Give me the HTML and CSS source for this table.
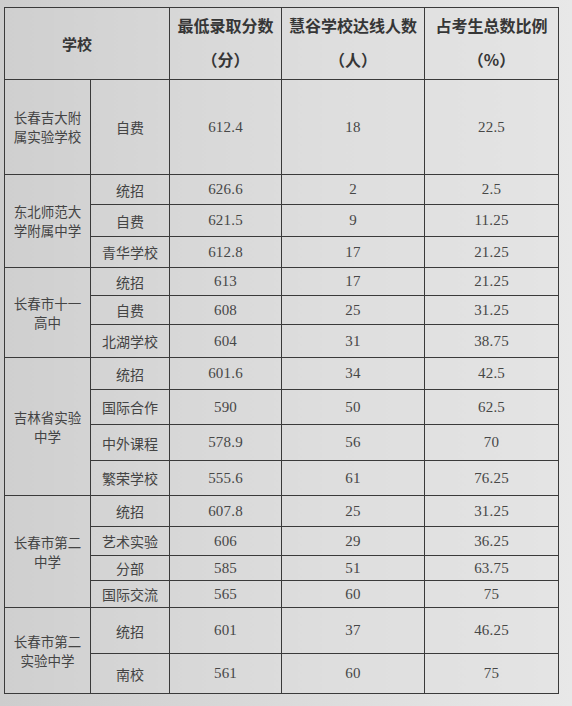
FILE: index.html
```html
<!DOCTYPE html>
<html lang="zh-CN">
<head>
<meta charset="utf-8">
<title>录取分数表</title>
<link rel="stylesheet" href="styles.css">
</head>
<body>
<div class="sheet">
<table class="score-table">
  <colgroup>
    <col class="c1"><col class="c2"><col class="c3"><col class="c4"><col class="c5">
  </colgroup>
  <thead>
    <tr class="rh">
      <th colspan="2" class="hs">学校</th>
      <th>最低录取分数<br>（分）</th>
      <th>慧谷学校达线人数<br>（人）</th>
      <th>占考生总数比例<br>（%）</th>
    </tr>
  </thead>
  <tbody>
    <tr class="r95">
      <td class="school">长春吉大附<br>属实验学校</td>
      <td class="kind">自费</td><td class="num">612.4</td><td class="num">18</td><td class="num">22.5</td>
    </tr>

    <tr class="r30">
      <td class="school" rowspan="3">东北师范大<br>学附属中学</td>
      <td class="kind">统招</td><td class="num">626.6</td><td class="num">2</td><td class="num">2.5</td>
    </tr>
    <tr class="r32"><td class="kind">自费</td><td class="num">621.5</td><td class="num">9</td><td class="num">11.25</td></tr>
    <tr class="r31"><td class="kind">青华学校</td><td class="num">612.8</td><td class="num">17</td><td class="num">21.25</td></tr>

    <tr class="r28">
      <td class="school" rowspan="3">长春市十一<br>高中</td>
      <td class="kind">统招</td><td class="num">613</td><td class="num">17</td><td class="num">21.25</td>
    </tr>
    <tr class="r29"><td class="kind">自费</td><td class="num">608</td><td class="num">25</td><td class="num">31.25</td></tr>
    <tr class="r33"><td class="kind">北湖学校</td><td class="num">604</td><td class="num">31</td><td class="num">38.75</td></tr>

    <tr class="r32">
      <td class="school" rowspan="4">吉林省实验<br>中学</td>
      <td class="kind">统招</td><td class="num">601.6</td><td class="num">34</td><td class="num">42.5</td>
    </tr>
    <tr class="r35"><td class="kind">国际合作</td><td class="num">590</td><td class="num">50</td><td class="num">62.5</td></tr>
    <tr class="r36"><td class="kind">中外课程</td><td class="num">578.9</td><td class="num">56</td><td class="num">70</td></tr>
    <tr class="r35"><td class="kind">繁荣学校</td><td class="num">555.6</td><td class="num">61</td><td class="num">76.25</td></tr>

    <tr class="r31">
      <td class="school" rowspan="4">长春市第二<br>中学</td>
      <td class="kind">统招</td><td class="num">607.8</td><td class="num">25</td><td class="num">31.25</td>
    </tr>
    <tr class="r29"><td class="kind">艺术实验</td><td class="num">606</td><td class="num">29</td><td class="num">36.25</td></tr>
    <tr class="r25"><td class="kind">分部</td><td class="num">585</td><td class="num">51</td><td class="num">63.75</td></tr>
    <tr class="r27"><td class="kind">国际交流</td><td class="num">565</td><td class="num">60</td><td class="num">75</td></tr>

    <tr class="r46">
      <td class="school" rowspan="2">长春市第二<br>实验中学</td>
      <td class="kind">统招</td><td class="num">601</td><td class="num">37</td><td class="num">46.25</td>
    </tr>
    <tr class="r40"><td class="kind">南校</td><td class="num">561</td><td class="num">60</td><td class="num">75</td></tr>
  </tbody>
</table>
</div>
</body>
</html>
```

FILE: styles.css
```css
html, body {
  margin: 0;
  padding: 0;
}

body {
  width: 572px;
  height: 706px;
  overflow: hidden;
  background: linear-gradient(90deg, #cdcdcd 0%, #d6d6d6 35%, #e0e0e0 70%, #e8e8e8 100%);
  font-family: "Noto Sans CJK SC", "Noto Sans", sans-serif;
  color: #444444;
}

.sheet {
  padding: 7px 0 0 4px;
}

.score-table {
  border-collapse: collapse;
  table-layout: fixed;
  width: 554px;
  background: linear-gradient(90deg, #cfcfcf 0%, #d7d7d7 30%, #dedede 60%, #e4e4e4 100%);
}

.c1 { width: 86px; }
.c2 { width: 79px; }
.c3 { width: 112px; }
.c4 { width: 143px; }
.c5 { width: 134px; }

.score-table th,
.score-table td {
  border: 1px solid #3a3a3a;
  padding: 0;
  text-align: center;
  vertical-align: middle;
}

.score-table th {
  font-weight: 700;
  font-size: 16px;
  line-height: 34px;
  color: #363636;
  padding-bottom: 3px;
}

.score-table th.hs {
  font-size: 15px;
  padding-right: 20px;
  padding-bottom: 0;
}

.school {
  font-size: 13.5px;
  line-height: 19px;
  color: #444444;
}

.kind {
  font-size: 14px;
  color: #444444;
}

.num {
  font-family: "Liberation Serif", "DejaVu Serif", serif;
  font-size: 15px;
  color: #474747;
  letter-spacing: 0.2px;
}

.rh { height: 72px; }
.r95 { height: 95px; }
.r25 { height: 25px; }
.r27 { height: 27px; }
.r28 { height: 28px; }
.r29 { height: 29px; }
.r30 { height: 30px; }
.r31 { height: 31px; }
.r32 { height: 32px; }
.r33 { height: 33px; }
.r35 { height: 35px; }
.r36 { height: 36px; }
.r40 { height: 40px; }
.r46 { height: 46px; }
```
